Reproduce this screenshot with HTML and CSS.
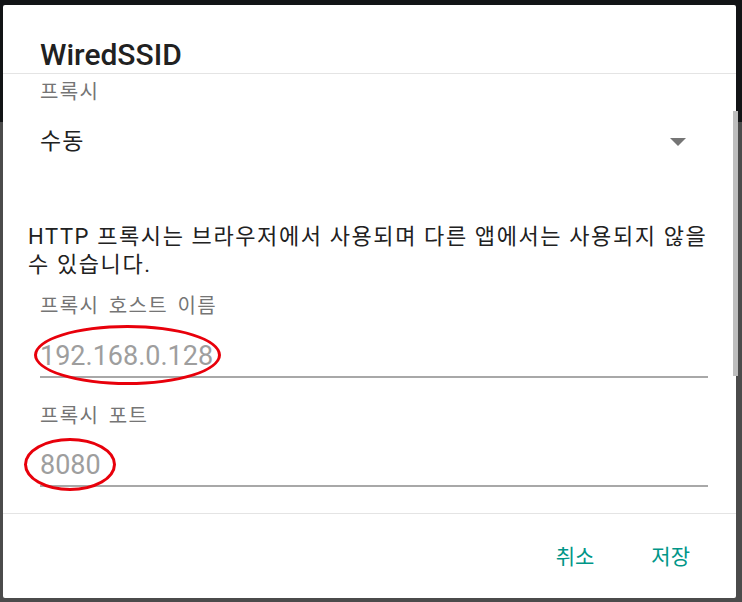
FILE: index.html
```html
<!DOCTYPE html>
<html lang="ko">
<head>
<meta charset="utf-8">
<title>WiredSSID</title>
<link rel="stylesheet" href="styles.css">
</head>
<body>
<div class="screen">
  <div class="dialog">
    <div class="header">
      <h1 class="title">WiredSSID</h1>
    </div>
    <div class="content">
      <div class="scrollbar"></div>
      <div class="label label-first">프록시</div>
      <div class="select">
        <span class="select-value">수동</span>
        <svg class="caret" width="16" height="8" viewBox="0 0 16 8"><path d="M0 0H16L8 8Z" fill="#757575"/></svg>
      </div>
      <p class="note">HTTP 프록시는 브라우저에서 사용되며 다른 앱에서는 사용되지 않을 수 있습니다.</p>
      <div class="field field-host">
        <div class="label">프록시 호스트 이름</div>
        <div class="input-wrap">
          <div class="input">192.168.0.128</div>
          <div class="mark mark-host"></div>
        </div>
        <div class="underline"></div>
      </div>
      <div class="field field-port">
        <div class="label">프록시 포트</div>
        <div class="input-wrap">
          <div class="input">8080</div>
          <div class="mark mark-port"></div>
        </div>
        <div class="underline"></div>
      </div>
    </div>
    <div class="actions">
      <button class="btn">취소</button>
      <button class="btn">저장</button>
    </div>
  </div>
</div>
</body>
</html>
```

FILE: styles.css
```css
* { box-sizing: border-box; }
html, body { margin: 0; padding: 0; }
body {
  width: 742px;
  height: 602px;
  overflow: hidden;
  background: linear-gradient(to bottom, #121416 0, #121416 122px, #4b4b4b 122px, #4b4b4b 100%);
  font-family: Roboto, "Noto Sans CJK KR", sans-serif;
}
.screen {
  height: 602px;
  padding: 5px 6px 4px 3px;
}
.dialog {
  height: 593px;
  background: #fff;
  border-radius: 2px;
  display: flex;
  flex-direction: column;
}
.header {
  padding: 32px 0 1px 37px;
  border-bottom: 1px solid #e4e4e4;
}
.title {
  margin: 0;
  font-size: 30px;
  line-height: 35px;
  font-weight: 500;
  color: #212121;
}
.content {
  position: relative;
  flex: 1;
  border-bottom: 1px solid #e4e4e4;
  padding: 0 28px 0 37px;
}
.scrollbar {
  position: absolute;
  right: -2px;
  top: 37px;
  width: 5px;
  height: 265px;
  background: #bdbdbd;
}
.label {
  font-size: 20px;
  line-height: 24px;
  letter-spacing: 1.4px;
  word-spacing: 3px;
  color: #757575;
}
.label-first { margin-top: 6px; }
.select {
  margin-top: 22px;
  height: 32px;
  display: flex;
  align-items: center;
  justify-content: space-between;
  padding-right: 22px;
}
.select-value {
  font-size: 23px;
  line-height: 32px;
  letter-spacing: 1px;
  color: #212121;
}
.caret { display: block; }
.note {
  margin: 65px 0 0 -12px;
  font-size: 22px;
  line-height: 28px;
  letter-spacing: 1.6px;
  color: #212121;
}
.field-host { margin-top: 15px; }
.field-port { margin-top: 26px; }
.input-wrap {
  position: relative;
  margin-top: 20px;
}
.field-port .input-wrap { margin-top: 19px; }
.input {
  font-size: 27px;
  line-height: 36px;
  color: #9e9e9e;
}
.underline {
  margin-top: 2px;
  height: 2px;
  background: #a8a8a8;
}
.mark {
  position: absolute;
  border: 3px solid #e8000b;
  border-radius: 50%;
}
.mark-host {
  left: -6px;
  top: -13px;
  width: 187px;
  height: 60px;
}
.mark-port {
  left: -16px;
  top: -9px;
  width: 92px;
  height: 53px;
}
.actions {
  height: 84px;
  display: flex;
  justify-content: flex-end;
  align-items: center;
  padding: 2px 46px 0 0;
  gap: 57px;
}
.btn {
  border: 0;
  background: none;
  padding: 0;
  font-family: Roboto, "Noto Sans CJK KR", sans-serif;
  font-size: 21px;
  line-height: 28px;
  font-weight: 400;
  color: #009688;
}
```
